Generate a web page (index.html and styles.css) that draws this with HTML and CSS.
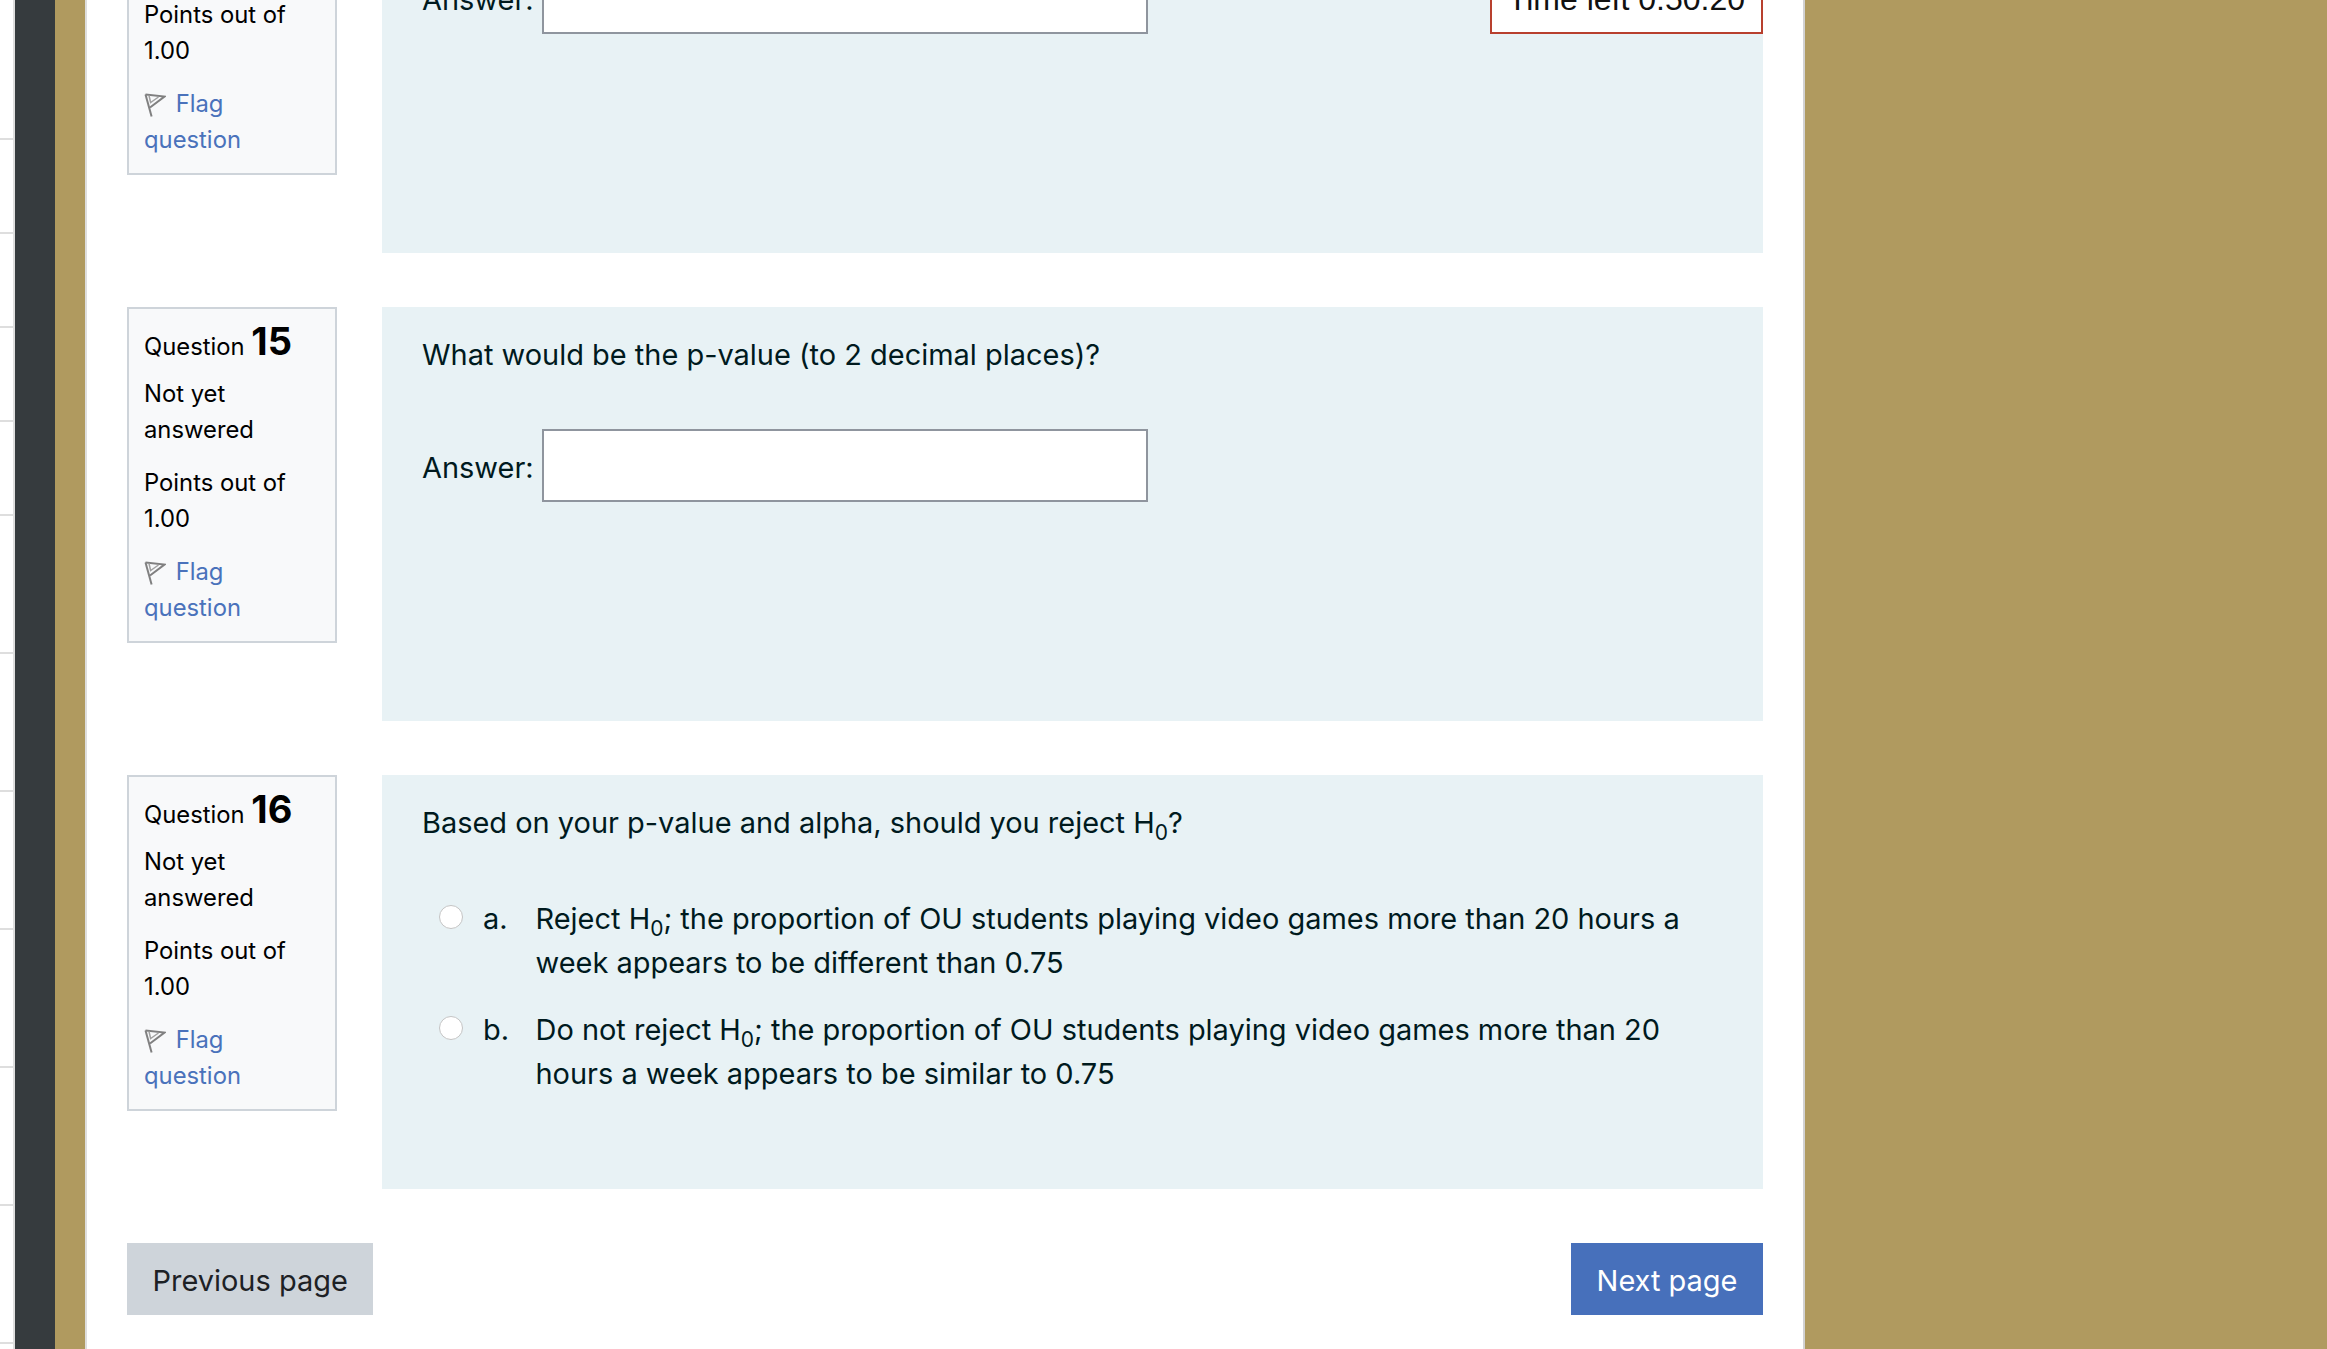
FILE: index.html
```html
<!DOCTYPE html>
<html lang="en">
<head>
<meta charset="utf-8">
<title>Quiz attempt</title>
<link rel="stylesheet" href="styles.css">
</head>
<body>
<div class="page">
  <div class="strip">
    <div class="row first"></div><div class="row"></div><div class="row"></div><div class="row"></div><div class="row"></div>
    <div class="row tall"></div><div class="row tall"></div><div class="row tall"></div><div class="row tall"></div><div class="row tall"></div><div class="row tall"></div>
  </div>
  <div class="dark"></div>
  <div class="gold-band"></div>
  <main class="card">
    <div class="timer">Time left 0:50:20</div>
    <div class="questions">
      <section class="que">
        <aside class="info">
          <h3 class="qno">Question <span class="num">14</span></h3>
          <p class="state">Not yet answered</p>
          <p class="grade">Points out of 1.00</p>
          <a class="flag" href="#"><svg class="flag-icon" viewBox="0 0 22 24"><path d="M1.5 1.5 7.6 23.5" /><path d="M1.5 1.5 20.5 3.6 6 14.5" /><path class="thin" d="M5 2.5 6.6 9.5 14.5 4" /></svg> Flag question</a>
        </aside>
        <div class="content">
          <p class="qtext">What would be the test statistic (to 2 decimal places)?</p>
          <div class="answer-row"><label class="answer-label">Answer:</label><input class="answer" type="text"></div>
        </div>
      </section>
      <section class="que">
        <aside class="info">
          <h3 class="qno">Question <span class="num">15</span></h3>
          <p class="state">Not yet answered</p>
          <p class="grade">Points out of 1.00</p>
          <a class="flag" href="#"><svg class="flag-icon" viewBox="0 0 22 24"><path d="M1.5 1.5 7.6 23.5" /><path d="M1.5 1.5 20.5 3.6 6 14.5" /><path class="thin" d="M5 2.5 6.6 9.5 14.5 4" /></svg> Flag question</a>
        </aside>
        <div class="content">
          <p class="qtext">What would be the p-value (to 2 decimal places)?</p>
          <div class="answer-row"><label class="answer-label">Answer:</label><input class="answer" type="text"></div>
        </div>
      </section>
      <section class="que">
        <aside class="info">
          <h3 class="qno">Question <span class="num">16</span></h3>
          <p class="state">Not yet answered</p>
          <p class="grade">Points out of 1.00</p>
          <a class="flag" href="#"><svg class="flag-icon" viewBox="0 0 22 24"><path d="M1.5 1.5 7.6 23.5" /><path d="M1.5 1.5 20.5 3.6 6 14.5" /><path class="thin" d="M5 2.5 6.6 9.5 14.5 4" /></svg> Flag question</a>
        </aside>
        <div class="content">
          <p class="qtext">Based on your p-value and alpha, should you reject H<sub>0</sub>?</p>
          <div class="options">
            <div class="option">
              <input class="radio" type="radio" name="q16">
              <span class="letter">a.</span>
              <span class="opt-text">Reject H<sub>0</sub>; the proportion of OU students playing video games more than 20 hours a week appears to be different than 0.75</span>
            </div>
            <div class="option">
              <input class="radio" type="radio" name="q16">
              <span class="letter">b.</span>
              <span class="opt-text">Do not reject H<sub>0</sub>; the proportion of OU students playing video games more than 20 hours a week appears to be similar to 0.75</span>
            </div>
          </div>
        </div>
      </section>
    </div>
    <div class="nav">
      <button class="btn prev" type="button">Previous page</button>
      <button class="btn next" type="button">Next page</button>
    </div>
  </main>
  <div class="gold-rest"></div>
</div>
</body>
</html>
```

FILE: styles.css
```css
* { box-sizing: border-box; }
html, body { margin: 0; height: 1349px; overflow: hidden; background: #fff; }
body { font-family: Inter, "Noto Sans", sans-serif; color: #000; }

.page { display: flex; height: 1349px; overflow: hidden; }

.strip { width: 15px; flex: none; border-right: 2px solid #dedede; background: #fff; }
.row { height: 94px; border-bottom: 2px solid #dedede; }
.row.first { height: 140px; }
.row.tall { height: 138px; }

.dark { width: 40px; flex: none; background: #363b3e; }
.gold-band { width: 30px; flex: none; background: #b09a5f; }
.gold-rest { flex: 1; background: #b09a5f; }

.card {
  position: relative;
  width: 1720px;
  flex: none;
  padding: 0 40px;
  background: #fff;
  border-left: 2px solid #dedede;
  border-right: 2px solid #d2d2d2;
}

.timer {
  position: absolute;
  right: 40px;
  top: -40px;
  width: 273px;
  height: 74px;
  padding: 19px 16px 0 0;
  text-align: right;
  font-family: "Liberation Sans", Arial, sans-serif;
  font-size: 32px;
  line-height: 36px;
  color: #111;
  background: #fff;
  border: 2px solid #b8402e;
  z-index: 2;
}

.questions { margin-top: -161px; }
.que { display: flex; gap: 45px; align-items: flex-start; margin-bottom: 54px; }

.info {
  width: 210px;
  flex: none;
  padding: 10px 15px 15px;
  background: #f8f9fa;
  border: 2px solid #ced4da;
  font-size: 23.8px;
  line-height: 35.6px;
}
.info p { margin: 0 0 18px; }
.qno { margin: 0 0 7px; font-size: 23.8px; font-weight: 400; line-height: 44px; }
.num { font-size: 38px; font-weight: 700; }
.flag { display: block; color: #4a72bb; text-decoration: none; }
.flag-icon { width: 22px; height: 24px; margin-right: 3px; vertical-align: -5px; fill: none; stroke: #808080; stroke-width: 2; }
.flag-icon .thin { stroke: #a0a0a0; stroke-width: 1.5; }

.content {
  flex: 1;
  height: 414px;
  padding: 26px 40px 0;
  background: #e8f2f5;
  color: #001a1e;
  font-size: 28.96px;
  line-height: 44px;
}
.qtext { margin: 0 0 52px; }
sub { font-size: 21px; line-height: 0; }

.answer-row { display: flex; align-items: center; gap: 8.5px; }
.answer {
  width: 606px;
  height: 73px;
  background: #fff;
  border: 2px solid #8f959e;
  border-radius: 0;
  padding: 0 16px;
  outline: none;
}
.answer-label { position: relative; top: 2px; }

.options { margin-top: 10px; display: flex; flex-direction: column; gap: 23px; }
.option { display: flex; padding-left: 17px; }
.radio {
  appearance: none;
  width: 24px;
  height: 24px;
  flex: none;
  margin: 8px 20px 0 0;
  border-radius: 50%;
  background: #fff;
  border: 1.5px solid #c4c4c4;
}
.letter { width: 52.5px; flex: none; }
.opt-text { flex: 1; }

.nav { display: flex; justify-content: space-between; }
.btn {
  height: 72px;
  padding: 2px 25.5px 0;
  border: none;
  border-radius: 0;
  font-family: inherit;
  font-size: 28.96px;
}
.prev { background: #ced4da; color: #1d2125; }
.next { background: #4770bb; color: #fff; }
```
